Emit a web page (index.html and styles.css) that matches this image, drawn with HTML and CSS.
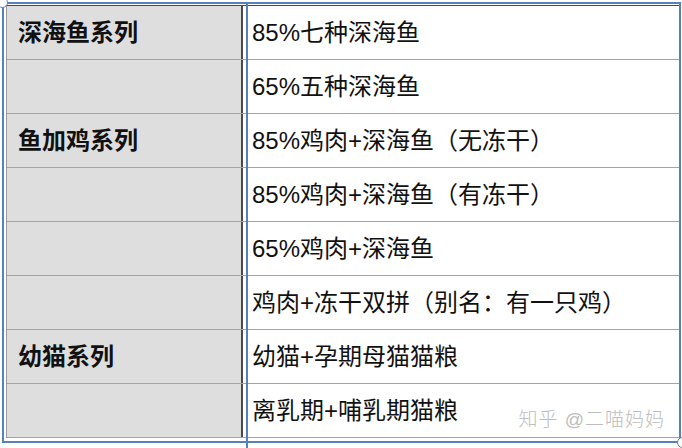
FILE: index.html
```html
<!DOCTYPE html>
<html lang="zh">
<head>
<meta charset="utf-8">
<link rel="stylesheet" href="styles.css">
</head>
<body>
<div class="page">
  <div class="sheet">
    <div class="row"><div class="cat">深海鱼系列</div><div class="item">85%七种深海鱼</div></div>
    <div class="row"><div class="cat"></div><div class="item">65%五种深海鱼</div></div>
    <div class="row"><div class="cat">鱼加鸡系列</div><div class="item">85%鸡肉+深海鱼（无冻干）</div></div>
    <div class="row"><div class="cat"></div><div class="item">85%鸡肉+深海鱼（有冻干）</div></div>
    <div class="row"><div class="cat"></div><div class="item">65%鸡肉+深海鱼</div></div>
    <div class="row"><div class="cat"></div><div class="item">鸡肉+冻干双拼（别名：有一只鸡）</div></div>
    <div class="row"><div class="cat">幼猫系列</div><div class="item">幼猫+孕期母猫猫粮</div></div>
    <div class="row"><div class="cat"></div><div class="item">离乳期+哺乳期猫粮</div></div>
  </div>
  <div class="sel-outer"></div>
  <div class="sel-col"></div>
  <div class="handle handle-tl"></div>
  <div class="handle handle-br"></div>
  <div class="watermark">知乎 @二喵妈妈</div>
</div>
</body>
</html>
```
FILE: styles.css
```css
html, body {
  margin: 0;
  padding: 0;
  background: #ffffff;
}
.page {
  position: relative;
  width: 682px;
  height: 448px;
  overflow: hidden;
  padding: 5px 0 0 6px;
  box-sizing: border-box;
  font-family: "Liberation Sans", "Noto Sans CJK SC", sans-serif;
  color: #111;
}
.sheet {
  width: 672px;
  border-top: 1px solid #4a4a4a;
  border-left: 1px solid #9a9a9a;
  border-right: 1px solid #9aa59a;
}
.row {
  display: grid;
  grid-template-columns: 236px 1fr;
  height: 54px;
  border-bottom: 1px solid #a3a3a3;
  box-sizing: border-box;
}
.cat {
  background: #dedede;
  border-right: 2px solid #4a4a4a;
  font-weight: 700;
  font-size: 24px;
  line-height: 53px;
  padding-left: 11px;
}
.item {
  font-size: 24px;
  line-height: 53px;
  padding-left: 9px;
  white-space: nowrap;
}
.sel-outer {
  position: absolute;
  left: 2px;
  top: 2px;
  width: 675px;
  height: 437px;
  border: 2px solid #5781bd;
}
.sel-col {
  position: absolute;
  left: 246px;
  top: 2px;
  width: 2px;
  height: 446px;
  background: #5781bd;
}
.handle {
  position: absolute;
  width: 9px;
  height: 9px;
  border-radius: 50%;
  background: #ffffff;
  border: 1.5px solid #5781bd;
}
.handle-tl {
  left: -3px;
  top: -3px;
}
.handle-br {
  left: 677px;
  top: 437px;
}
.watermark {
  position: absolute;
  right: 17px;
  bottom: 18px;
  font-size: 19px;
  line-height: 20px;
  letter-spacing: 1px;
  color: #bdbdbd;
  font-weight: 300;
  text-shadow: 0 0 1px #fff;
  white-space: nowrap;
}
```
